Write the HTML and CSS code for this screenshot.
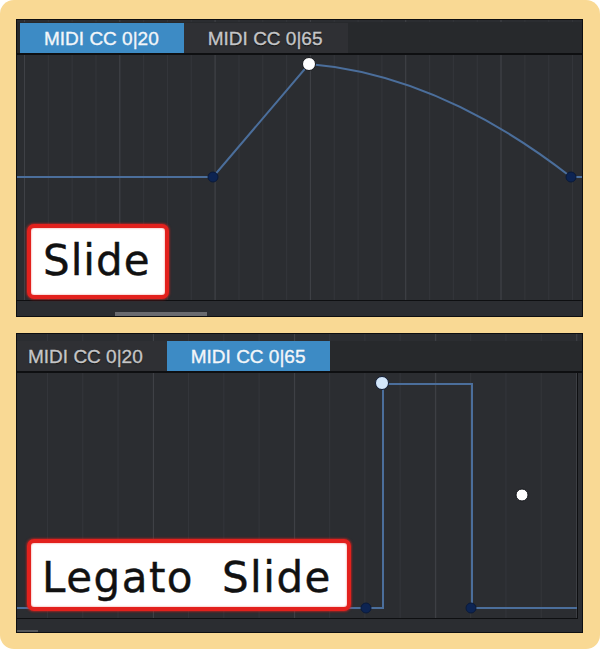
FILE: index.html
```html
<!DOCTYPE html>
<html lang="en">
  <head>
    <meta charset="UTF-8" />
    <meta name="viewport" content="width=device-width, initial-scale=1.0" />
    <title>Slide and Legato Slide</title>
    <link rel="stylesheet" href="styles.css">
  </head>
  <body>
    <div class="frame">

      <!-- Slide example -->
      <section class="panel panel-top">
        <div class="ruler"></div>
        <div class="tabs">
          <span class="tab active">MIDI CC 0|20</span>
          <span class="tab">MIDI CC 0|65</span>
        </div>
        <div class="graph">
          <svg class="curve" viewBox="0 0 565 245" width="565" height="245">
            <path d="M0 122 L196 122 L292 9 Q423 20 554 122 L565 122" />
            <circle class="node dark" cx="196" cy="122" r="5" />
            <circle class="node dark" cx="554" cy="122" r="5" />
            <circle class="node white" cx="292" cy="9" r="6.5" />
          </svg>
          <div class="label label-slide">Slide</div>
        </div>
        <div class="scroll"><span class="thumb"></span></div>
      </section>

      <!-- Legato slide example -->
      <section class="panel panel-bottom">
        <div class="ruler"></div>
        <div class="tabs">
          <span class="tab">MIDI CC 0|20</span>
          <span class="tab active">MIDI CC 0|65</span>
        </div>
        <div class="graph">
          <svg class="curve" viewBox="0 0 560 245" width="560" height="245">
            <path d="M0 235 L366 235 L366 11 L455 11 L455 235 L560 235" />
            <circle class="node dark" cx="349" cy="235" r="5" />
            <circle class="node dark" cx="454" cy="235" r="5" />
            <circle class="node light" cx="365" cy="10" r="6.5" />
            <circle class="node white" cx="505" cy="122" r="6" />
          </svg>
          <div class="label label-legato">Legato Slide</div>
        </div>
        <div class="scroll"><span class="thumb"></span></div>
      </section>

    </div>
  </body>
</html>
```

FILE: styles.css
```css
/* Page and yellow frame */
body {
  margin: 0;
  background: #fff;
  font-family: "Liberation Sans", Arial, sans-serif;
}

.frame {
  width: 600px;
  height: 649px;
  box-sizing: border-box;
  padding: 19px 17px 0 16px;
  background: #f9d994;
  border-radius: 14px;
  display: flex;
  flex-direction: column;
  gap: 16px;
}

/* Editor panels */
.panel {
  border: 1px solid #0e0f11;
  background: #2b2d31;
  overflow: hidden;
}

.ruler {
  height: 2px;
  background-color: #2b2d31;
}

.panel-bottom .ruler {
  height: 7px;
}

/* Grid lines */
.panel-top .ruler,
.panel-top .graph {
  background-image:
    linear-gradient(to right, #3f4146 0 1px, transparent 1px),
    linear-gradient(to right, #33353a 0 1px, transparent 1px);
  background-size: 95.3px 100%, 23.83px 100%;
  background-position: 7px 0, 7px 0;
}

.panel-bottom .ruler,
.panel-bottom .graph {
  background-image:
    linear-gradient(to right, #3f4146 0 1px, transparent 1px),
    linear-gradient(to right, #33353a 0 1px, transparent 1px);
  background-size: 141.1px 100%, 35.27px 100%;
  background-position: 136px 0, 30px 0;
}

/* Tabs */
.tabs {
  display: flex;
  background: #27292c;
  border-bottom: 2px solid #0e0f11;
  font-size: 19px;
  line-height: 28px;
  white-space: nowrap;
}

.panel-top .tabs {
  padding: 1px 0 0 3px;
}

.panel-bottom .tabs {
  margin-left: -13px;
}

.tab {
  padding: 2px 24px 0;
  background: #2f3034;
  color: #c5c6c8;
  -webkit-text-stroke: 0.35px currentColor;
  text-shadow: 0 1px 1px #111;
}

.tab.active {
  background: #3d8bc5;
  color: #f3f6f9;
  text-shadow: none;
}

.panel-top .tab {
  padding-right: 25px;
}

/* Graph area */
.graph {
  position: relative;
  height: 245px;
  background-color: #2b2d31;
  border-bottom: 1px solid #0e0f11;
}

.panel-bottom .graph {
  margin-right: 4px;
  border-right: 1px solid #0e0f11;
}

.curve {
  display: block;
}

.curve path {
  fill: none;
  stroke: #4b6e9b;
  stroke-width: 2;
}

.node {
  stroke-width: 1;
}

.node.dark {
  fill: #0d2452;
  stroke: #0a1a3a;
}

.node.white {
  fill: #fff;
  stroke: #15171c;
}

.node.light {
  fill: #d3e7fb;
  stroke: #0f1a33;
}

/* Annotations */
.label {
  position: absolute;
  left: 10px;
  background: #fff;
  border: 4px solid #e2211d;
  border-radius: 7px;
  box-shadow: 0 0 2px 1px rgba(226, 33, 29, 0.55), inset 0 0 2px rgba(226, 33, 29, 0.6);
  font-family: "DejaVu Sans", Verdana, sans-serif;
  font-size: 42px;
  line-height: 49px;
  letter-spacing: 1px;
  color: #111;
  -webkit-text-stroke: 0.4px #111;
  white-space: nowrap;
}

.label-slide {
  top: 169px;
  padding: 8px 14px 10px 12px;
}

.label-legato {
  top: 166px;
  padding: 10px 15px 5px 11px;
  letter-spacing: 1.5px;
  word-spacing: 13px;
}

/* Scroll strip */
.scroll {
  height: 15px;
  display: flex;
  align-items: flex-end;
}

.panel-bottom .scroll {
  height: 13px;
}

.thumb {
  height: 4px;
  width: 92px;
  margin-left: 98px;
  background: #6a6b6f;
}

.panel-bottom .thumb {
  width: 21px;
  height: 2px;
  margin-left: 0;
  background: #55575b;
}
```
